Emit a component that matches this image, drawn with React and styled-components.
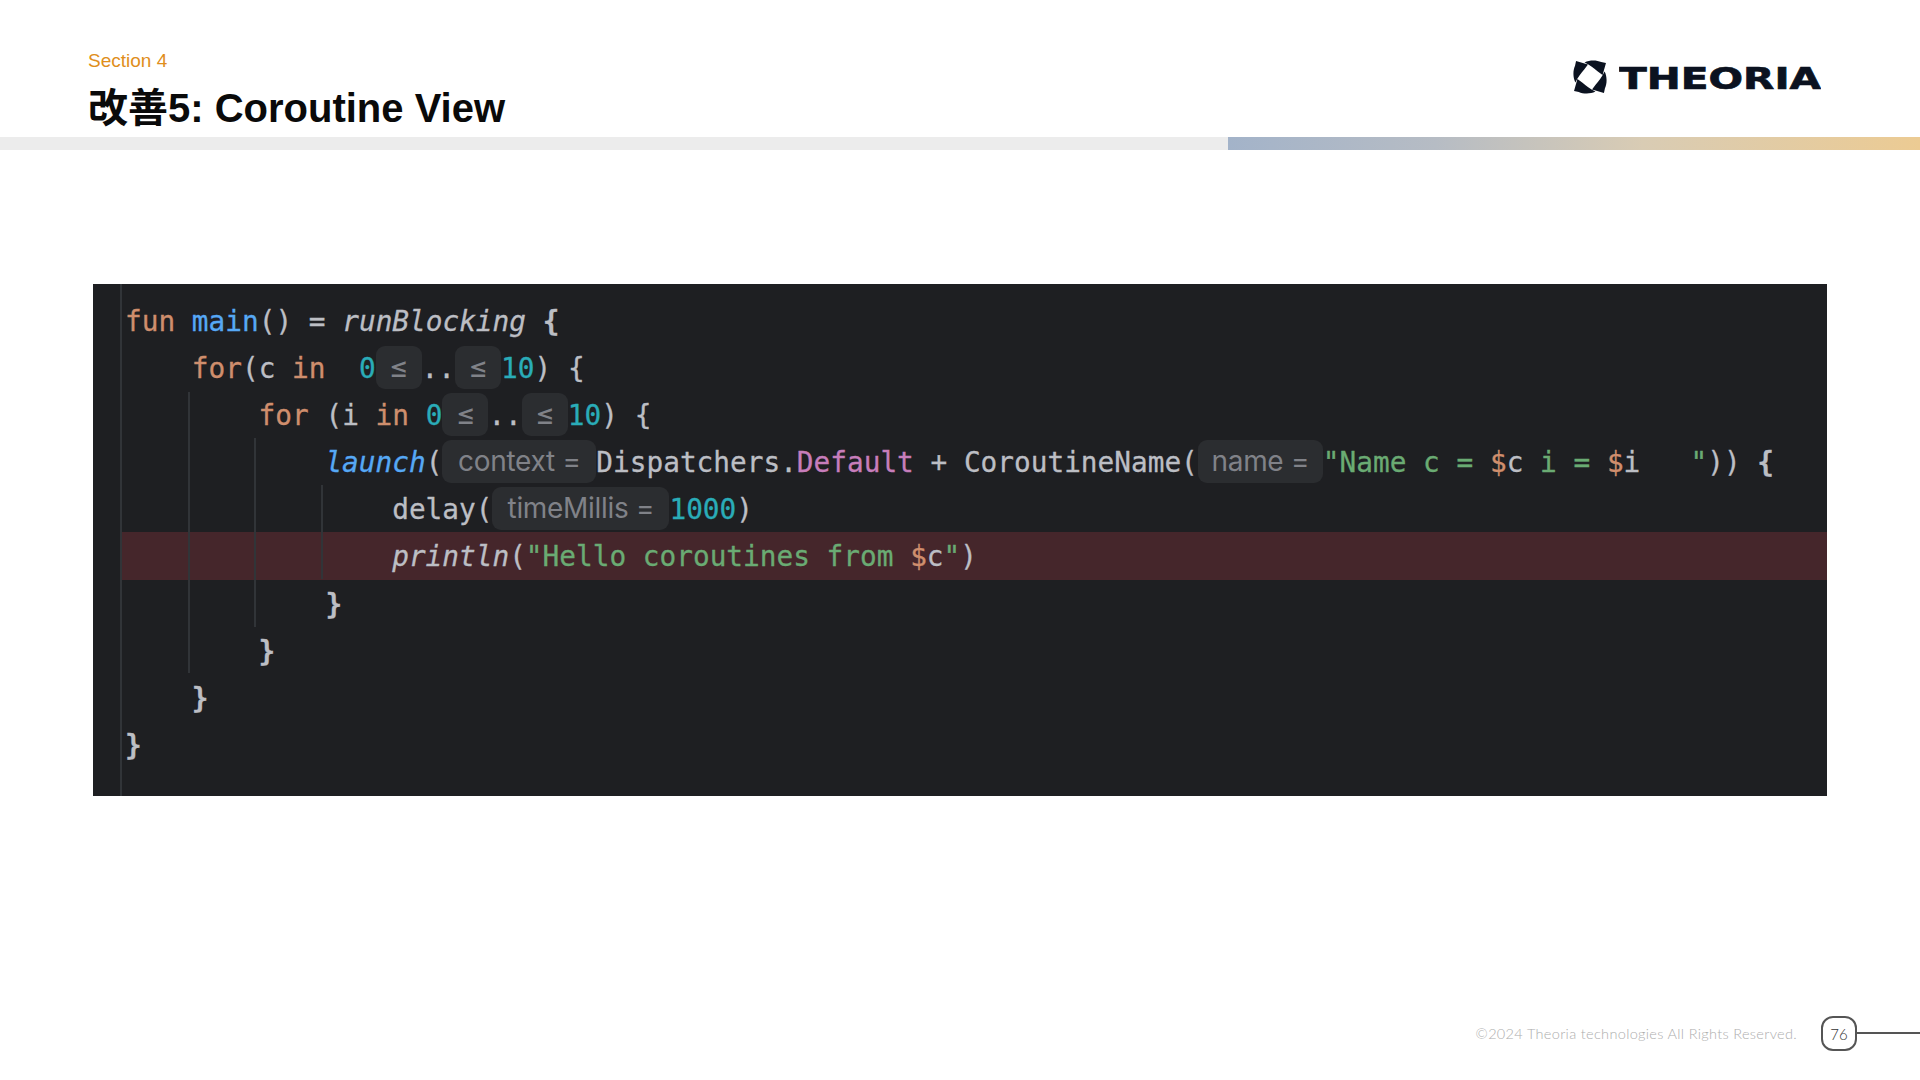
import React from "react";
import styled, { createGlobalStyle } from "styled-components";

const Global = createGlobalStyle`
  html, body {
    margin: 0;
    padding: 0;
    background: #ffffff;
  }
`;

const Slide = styled.div`
  width: 1920px;
  height: 1080px;
  display: flex;
  flex-direction: column;
  overflow: hidden;
  background: #ffffff;
`;

const Header = styled.header`
  height: 137px;
  box-sizing: border-box;
  padding: 0 93px 0 88px;
  display: flex;
  justify-content: space-between;
`;

const Titles = styled.div`
  display: flex;
  flex-direction: column;
  padding-top: 50px;
`;

const Section = styled.div`
  font-family: "Liberation Sans", Arial, sans-serif;
  font-size: 19px;
  line-height: 22px;
  color: #e08e1b;
`;

const Title = styled.h1`
  margin: 13px 0 0;
  font-family: "Liberation Sans", "Noto Sans CJK JP", sans-serif;
  font-size: 40px;
  line-height: 46px;
  font-weight: 700;
  color: #0a0a0a;
`;

const LogoMark = styled.div`
  display: flex;
  align-items: center;
  gap: 12px;
  margin: 57px 6px 0 0;
  height: 40px;
`;

const Bar = styled.div`
  height: 13px;
  flex: none;
  display: flex;
`;

const BarLeft = styled.div`
  width: 1228px;
  background: #ececec;
`;

const BarRight = styled.div`
  flex: 1;
  background: linear-gradient(90deg, #a3b3c9 0%, #b6bcc4 30%, #d9ccb4 60%, #eccb93 100%);
`;

const Panel = styled.main`
  margin: 134px 0 0 93px;
  width: 1734px;
  height: 512px;
  flex: none;
  box-sizing: border-box;
  padding-left: 27px;
  background: #1e1f22;
`;

const CodeArea = styled.div`
  position: relative;
  height: 100%;
  box-sizing: border-box;
  padding-top: 13px;
  border-left: 2px solid #313438;
`;

const Guide = styled.div`
  position: absolute;
  left: ${(p) => p.$left}px;
  top: ${(p) => p.$top}px;
  width: 2px;
  height: ${(p) => p.$height}px;
  background: #313438;
`;

const Row = styled.div`
  height: 47.1px;
  box-sizing: border-box;
  padding-left: ${(p) => 3 + p.$indent * 66.8}px;
  background: ${(p) => (p.$error ? "#45262b" : "transparent")};
  font-family: "DejaVu Sans Mono", "Liberation Mono", monospace;
  font-size: 27.75px;
  line-height: 49.5px;
  color: #bcbec4;
  white-space: pre;
  -webkit-text-stroke: 0.3px currentColor;
`;

const Kw = styled.span`
  color: #cf8e6d;
`;
const Fn = styled.span`
  color: #56a8f5;
  font-style: ${(p) => (p.$italic ? "italic" : "normal")};
`;
const Num = styled.span`
  color: #2aacb8;
`;
const Str = styled.span`
  color: #6aab73;
`;
const Field = styled.span`
  color: #c77dbb;
`;
const Ext = styled.span`
  font-style: italic;
`;
const Brace = styled.span`
  font-weight: 700;
`;

const Hint = styled.span`
  width: ${(p) => p.$w}px;
  height: 43px;
  display: inline-flex;
  vertical-align: middle;
  margin-top: -4px;
  transform: translateY(-1px);
  align-items: center;
  justify-content: center;
  border-radius: 9px;
  background: #2b2d30;
  color: #808288;
  font-family: Inter, "Liberation Sans", sans-serif;
  font-size: ${(p) => p.$size || 28}px;
  line-height: 43px;
  letter-spacing: -0.3px;
  -webkit-text-stroke: 0;
`;

const Footer = styled.footer`
  margin-top: 220px;
  height: 35px;
  display: flex;
  align-items: center;
  justify-content: flex-end;
`;

const Copyright = styled.div`
  margin-right: 24px;
  font-family: Lato, "Liberation Sans", sans-serif;
  font-weight: 300;
  font-size: 14.5px;
  letter-spacing: 0.33px;
  color: #adadad;
`;

const PageNo = styled.div`
  width: 36px;
  height: 35px;
  box-sizing: border-box;
  display: flex;
  align-items: center;
  justify-content: center;
  border: 2px solid #555555;
  border-radius: 12px;
  font-family: Lato, "Liberation Sans", sans-serif;
  font-weight: 300;
  font-size: 15px;
  color: #333333;
`;

const Connector = styled.div`
  width: 63px;
  height: 2px;
  margin-top: -2px;
  background: #555555;
`;

const Blade = "M34 7 C50 -1 70 0 83 6 L97 9 L87 44 L72 33 C62 24 50 15 34 7 Z";

const LogoIcon = () => (
  <svg width="34" height="34" viewBox="0 0 100 100">
    {[0, 90, 180, 270].map((r) => (
      <path key={r} d={Blade} fill="#0b1220" transform={`rotate(${r} 50 50)`} />
    ))}
  </svg>
);

const LogoText = () => (
  <svg width="202" height="40" viewBox="0 0 202 40">
    <text
      x="0"
      y="32"
      textLength="202"
      lengthAdjust="spacingAndGlyphs"
      fontFamily="DejaVu Sans"
      fontWeight="700"
      fontSize="31"
      fill="#0b1220"
      stroke="#0b1220"
      strokeWidth="0.7"
    >
      THEORIA
    </text>
  </svg>
);

const App = () => (
  <Slide>
    <Global />
    <Header>
      <Titles>
        <Section>Section 4</Section>
        <Title>改善5: Coroutine View</Title>
      </Titles>
      <LogoMark>
        <LogoIcon />
        <LogoText />
      </LogoMark>
    </Header>
    <Bar>
      <BarLeft />
      <BarRight />
    </Bar>
    <Panel>
      <CodeArea>
        <Guide $left={66} $top={108} $height={281} />
        <Guide $left={132} $top={154} $height={189} />
        <Guide $left={199} $top={201} $height={94} />
        <Row $indent={0}>
          <Kw>fun</Kw> <Fn>main</Fn>() = <Ext>runBlocking</Ext> <Brace>{"{"}</Brace>
        </Row>
        <Row $indent={1}>
          <Kw>for</Kw>(c <Kw>in</Kw>{"  "}<Num>0</Num><Hint $w={46} $size={30}>≤</Hint>..<Hint $w={46} $size={30}>≤</Hint><Num>10</Num>) {"{"}
        </Row>
        <Row $indent={2}>
          <Kw>for</Kw> (i <Kw>in</Kw> <Num>0</Num><Hint $w={46} $size={30}>≤</Hint>..<Hint $w={46} $size={30}>≤</Hint><Num>10</Num>) {"{"}
        </Row>
        <Row $indent={3}>
          <Fn $italic>launch</Fn>(<Hint $w={154}>context =</Hint>Dispatchers.<Field>Default</Field> + CoroutineName(<Hint $w={125}>name =</Hint><Str>"Name c = </Str><Kw>$</Kw>c<Str> i = </Str><Kw>$</Kw>i{"   "}<Str>"</Str>)) <Brace>{"{"}</Brace>
        </Row>
        <Row $indent={4}>
          delay(<Hint $w={177}>timeMillis =</Hint><Num>1000</Num>)
        </Row>
        <Row $indent={4} $error>
          <Ext>println</Ext>(<Str>"Hello coroutines from </Str><Kw>$</Kw>c<Str>"</Str>)
        </Row>
        <Row $indent={3}><Brace>{"}"}</Brace></Row>
        <Row $indent={2}><Brace>{"}"}</Brace></Row>
        <Row $indent={1}><Brace>{"}"}</Brace></Row>
        <Row $indent={0}><Brace>{"}"}</Brace></Row>
      </CodeArea>
    </Panel>
    <Footer>
      <Copyright>©2024 Theoria technologies All Rights Reserved.</Copyright>
      <PageNo>76</PageNo>
      <Connector />
    </Footer>
  </Slide>
);

export default App;
